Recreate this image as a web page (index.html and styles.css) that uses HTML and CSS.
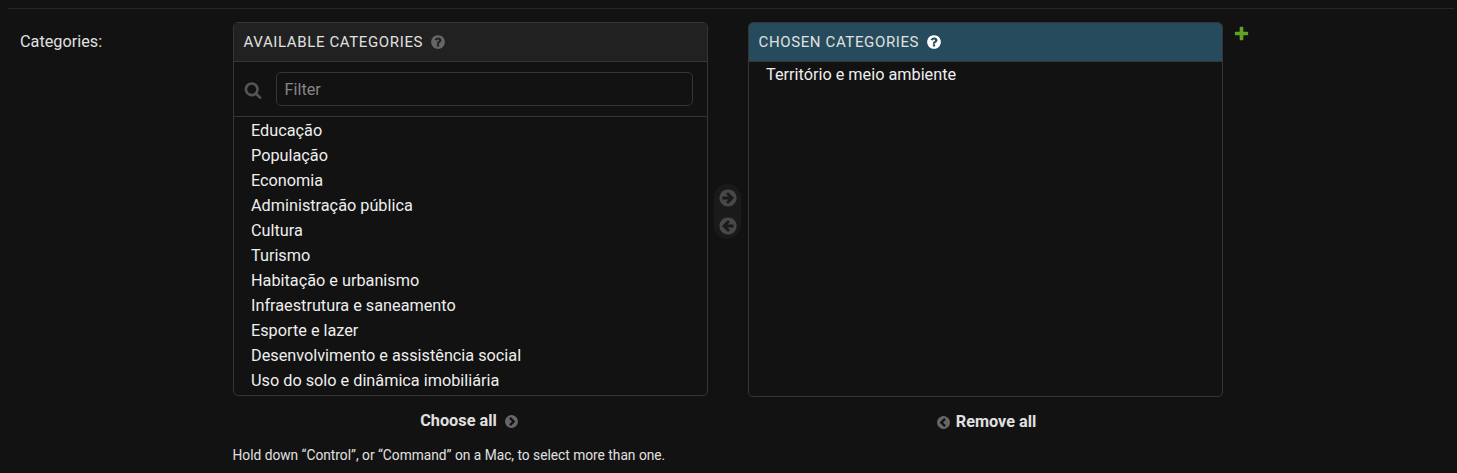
FILE: index.html
```html
<!DOCTYPE html>
<html lang="en">
<head>
<meta charset="utf-8">
<title>Categories</title>
<link rel="stylesheet" href="styles.css">
</head>
<body>
<div class="form-row">
  <label class="field-label">Categories:</label>
  <div class="field">
    <div class="selector">
      <section class="column available">
        <div class="panel">
          <h2 class="heading">Available categories
            <svg class="help" viewBox="0 0 1792 1792"><path fill="currentColor" d="M1024 1376v-192q0-14-9-23t-23-9h-192q-14 0-23 9t-9 23v192q0 14 9 23t23 9h192q14 0 23-9t9-23zm256-672q0-88-55.500-163t-138.500-116-170-41q-243 0-371 213-15 24 8 42l132 100q7 6 19 6 16 0 25-12 53-68 86-92 34-24 86-24 48 0 85.500 26t37.500 59q0 38-20 61t-68 45q-63 28-115.500 86.500t-52.500 125.500v36q0 14 9 23t23 9h192q14 0 23-9t9-23q0-19 21.500-49.500t54.500-49.500q32-18 49-28.500t46-35 44.500-48 28-60.500 12.500-81zm384 192q0 209-103 385.500t-279.500 279.500-385.500 103-385.500-103-279.500-279.500-103-385.500 103-385.500 279.500-279.500 385.500-103 385.500 103 279.500 279.500 103 385.500z"/></svg>
          </h2>
          <div class="filter">
            <svg class="search" viewBox="0 0 1792 1792"><path fill="currentColor" d="M1216 832q0-185-131.500-316.500t-316.500-131.500-316.500 131.500-131.500 316.500 131.500 316.500 316.500 131.500 316.500-131.500 131.500-316.500zm512 832q0 52-38 90t-90 38q-54 0-90-38l-343-342q-179 124-399 124-143 0-273.500-55.500t-225-150-150-225-55.500-273.500 55.500-273.500 150-225 225-150 273.500-55.500 273.500 55.500 225 150 150 225 55.500 273.500q0 220-124 399l343 343q37 37 37 90z"/></svg>
            <input type="text" placeholder="Filter" aria-label="Filter">
          </div>
          <ul class="options">
            <li>Educação</li>
            <li>População</li>
            <li>Economia</li>
            <li>Administração pública</li>
            <li>Cultura</li>
            <li>Turismo</li>
            <li>Habitação e urbanismo</li>
            <li>Infraestrutura e saneamento</li>
            <li>Esporte e lazer</li>
            <li>Desenvolvimento e assistência social</li>
            <li>Uso do solo e dinâmica imobiliária</li>
          </ul>
        </div>
        <a class="bulk">Choose all
          <svg viewBox="0 0 1792 1792"><path fill="currentColor" d="M845 1395l454-454q19-19 19-45t-19-45l-454-454q-19-19-45-19t-45 19l-102 102q-19 19-19 45t19 45l307 307-307 307q-19 19-19 45t19 45l102 102q19 19 45 19t45-19zm819-499q0 209-103 385.500t-279.500 279.500-385.500 103-385.500-103-279.500-279.500-103-385.500 103-385.500 279.500-279.500 385.500-103 385.500 103 279.500 279.500 103 385.500z"/></svg>
        </a>
      </section>
      <div class="chooser">
        <svg viewBox="0 0 1792 1792"><path fill="currentColor" d="M1413 896q0-27-18-45l-91-91-362-362q-18-18-45-18t-45 18l-91 91q-18 18-18 45t18 45l189 189h-502q-26 0-45 19t-19 45v128q0 26 19 45t45 19h502l-189 189q-19 19-19 45t19 45l91 91q18 18 45 18t45-18l362-362 91-91q18-18 18-45zm251 0q0 209-103 385.500t-279.500 279.500-385.500 103-385.500-103-279.500-279.500-103-385.500 103-385.500 279.500-279.500 385.500-103 385.500 103 279.500 279.500 103 385.500z"/></svg>
        <svg class="flip" viewBox="0 0 1792 1792"><path fill="currentColor" d="M1413 896q0-27-18-45l-91-91-362-362q-18-18-45-18t-45 18l-91 91q-18 18-18 45t18 45l189 189h-502q-26 0-45 19t-19 45v128q0 26 19 45t45 19h502l-189 189q-19 19-19 45t19 45l91 91q18 18 45 18t45-18l362-362 91-91q18-18 18-45zm251 0q0 209-103 385.500t-279.500 279.500-385.500 103-385.500-103-279.500-279.500-103-385.500 103-385.500 279.500-279.500 385.500-103 385.500 103 279.500 279.500 103 385.500z"/></svg>
      </div>
      <section class="column chosen">
        <div class="panel">
          <h2 class="heading">Chosen categories
            <svg class="help" viewBox="0 0 1792 1792"><path fill="currentColor" d="M1024 1376v-192q0-14-9-23t-23-9h-192q-14 0-23 9t-9 23v192q0 14 9 23t23 9h192q14 0 23-9t9-23zm256-672q0-88-55.500-163t-138.500-116-170-41q-243 0-371 213-15 24 8 42l132 100q7 6 19 6 16 0 25-12 53-68 86-92 34-24 86-24 48 0 85.500 26t37.500 59q0 38-20 61t-68 45q-63 28-115.500 86.500t-52.500 125.500v36q0 14 9 23t23 9h192q14 0 23-9t9-23q0-19 21.500-49.500t54.500-49.500q32-18 49-28.500t46-35 44.500-48 28-60.500 12.500-81zm384 192q0 209-103 385.500t-279.500 279.500-385.500 103-385.500-103-279.500-279.500-103-385.500 103-385.500 279.500-279.500 385.500-103 385.500 103 279.500 279.500 103 385.500z"/></svg>
          </h2>
          <ul class="options">
            <li>Território e meio ambiente</li>
          </ul>
        </div>
        <a class="bulk">
          <svg class="flip" viewBox="0 0 1792 1792"><path fill="currentColor" d="M845 1395l454-454q19-19 19-45t-19-45l-454-454q-19-19-45-19t-45 19l-102 102q-19 19-19 45t19 45l307 307-307 307q-19 19-19 45t19 45l102 102q19 19 45 19t45-19zm819-499q0 209-103 385.500t-279.500 279.500-385.500 103-385.500-103-279.500-279.500-103-385.500 103-385.500 279.500-279.500 385.500-103 385.500 103 279.500 279.500 103 385.500z"/></svg>
          Remove all</a>
      </section>
      <svg class="add" viewBox="0 0 1792 1792"><path fill="currentColor" d="M1600 796v192q0 40-28 68t-68 28h-416v416q0 40-28 68t-68 28h-192q-40 0-68-28t-28-68v-416h-416q-40 0-68-28t-28-68v-192q0-40 28-68t68-28h416v-416q0-40 28-68t68-28h192q40 0 68 28t28 68v416h416q40 0 68 28t28 68z"/></svg>
    </div>
    <p class="hint">Hold down “Control”, or “Command” on a Mac, to select more than one.</p>
  </div>
</div>
</body>
</html>
```

FILE: styles.css
```css
* { box-sizing: border-box; }

body {
  margin: 0;
  height: 473px;
  padding: 8px 3px 0 8px;
  overflow: hidden;
  background: #121212;
  color: #eee;
  font: 16.25px/25px Roboto, sans-serif;
}

svg { display: block; flex: none; }

.form-row {
  display: flex;
  border-top: 1px solid #272727;
  padding: 13px 0 0 12px;
}

.field-label { width: 212.5px; padding-top: 7px; color: #e0e0e0; }

.selector { display: flex; align-items: flex-start; }

.column { width: 475px; }

.panel {
  height: 374px;
  border: 1px solid #353535;
  border-radius: 5px;
  overflow: hidden;
}

.chosen .panel { height: 375px; }

.heading {
  display: flex;
  align-items: center;
  gap: 6.5px;
  height: 39px;
  margin: 0;
  padding: 0 10px;
  border-bottom: 1px solid #353535;
  background: #212121;
  color: #e0e0e0;
  font-size: 15px;
  font-weight: 400;
  letter-spacing: 0.625px;
  text-transform: uppercase;
}

.chosen .heading { background: #264b5d; }

.help { width: 16px; height: 16px; color: #666; }
.chosen .help { color: #fff; }

.filter {
  display: flex;
  align-items: center;
  height: 55px;
  padding: 0 14px 0 10px;
  border-bottom: 1px solid #353535;
}

.search { width: 18px; height: 18px; margin: 2px 14px 0 0; color: #555; }

.filter input {
  flex: 1;
  height: 34px;
  padding: 0 8px;
  border: 1px solid #353535;
  border-radius: 5px;
  background: #121212;
  color: #eee;
  font: 16.25px Roboto, sans-serif;
}

.filter input::placeholder { color: #858585; opacity: 1; }

.options { margin: 0; padding: 1px 17.5px; list-style: none; }
.chosen .options { padding-top: 0; }

.chooser {
  display: flex;
  flex-direction: column;
  gap: 8px;
  margin: 162px 6.5px 0;
  padding: 3.5px;
  border-radius: 14px;
  background: #1a1a1a;
  color: #484848;
}

.chooser svg { width: 20px; height: 20px; }

.flip { transform: scaleX(-1); }

.bulk {
  display: flex;
  align-items: center;
  justify-content: center;
  gap: 7px;
  padding: 12px 1px 0 0;
  color: #e0e0e0;
  font-weight: 700;
}

.bulk svg { width: 15px; height: 15px; margin-top: 1px; color: #666; }
.chosen .bulk { gap: 4.5px; padding: 12px 0 0 2.5px; }

.add { width: 17px; height: 17px; margin: 3px 0 0 10px; color: #5fa225; }

.hint { margin: 9px 0 0; color: #e0e0e0; font-size: 13.75px; }
```
